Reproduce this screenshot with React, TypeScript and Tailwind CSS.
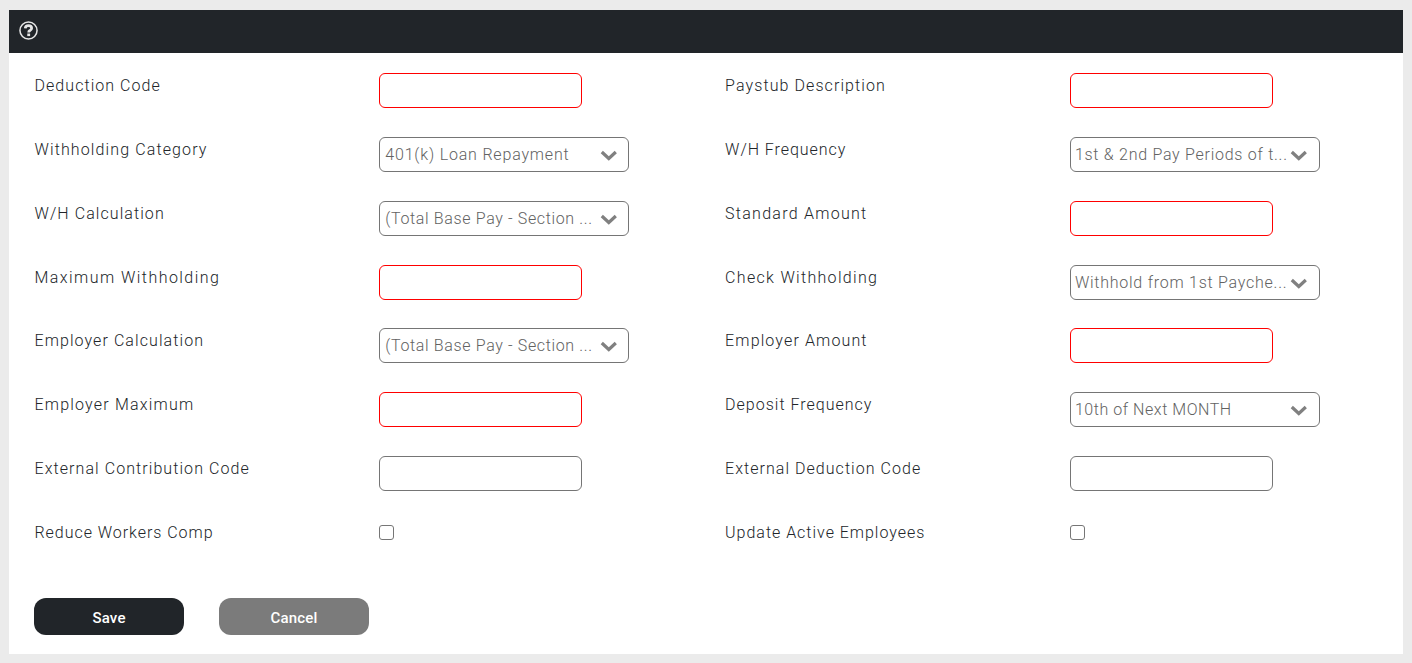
import { useState } from "react";

type FieldType = "text" | "select" | "checkbox";

interface Field {
  label: string;
  type: FieldType;
  value?: string;
  required?: boolean;
  labelClass: string;
  valueClass?: string;
}

const fields: Field[] = [
  { label: "Deduction Code", type: "text", required: true, labelClass: "tracking-[1.05px]" },
  { label: "Paystub Description", type: "text", required: true, labelClass: "tracking-[1.09px]" },
  { label: "Withholding Category", type: "select", value: "401(k) Loan Repayment", labelClass: "tracking-[1.12px]", valueClass: "tracking-[0.81px]" },
  { label: "W/H Frequency", type: "select", value: "1st & 2nd Pay Periods of t...", labelClass: "tracking-[0.95px]", valueClass: "tracking-[0.73px] -ml-px" },
  { label: "W/H Calculation", type: "select", value: "(Total Base Pay - Section ...", labelClass: "tracking-[1.07px]", valueClass: "tracking-[0.64px]" },
  { label: "Standard Amount", type: "text", required: true, labelClass: "tracking-[1.26px]" },
  { label: "Maximum Withholding", type: "text", required: true, labelClass: "tracking-[1.45px]" },
  { label: "Check Withholding", type: "select", value: "Withhold from 1st Payche...", labelClass: "tracking-[1.31px]", valueClass: "tracking-[0.75px] -ml-px" },
  { label: "Employer Calculation", type: "select", value: "(Total Base Pay - Section ...", labelClass: "tracking-[1.08px]", valueClass: "tracking-[0.64px]" },
  { label: "Employer Amount", type: "text", required: true, labelClass: "tracking-[1.13px]" },
  { label: "Employer Maximum", type: "text", required: true, labelClass: "tracking-[1.2px]" },
  { label: "Deposit Frequency", type: "select", value: "10th of Next MONTH", labelClass: "tracking-[1px]", valueClass: "tracking-[0.55px] -ml-px" },
  { label: "External Contribution Code", type: "text", labelClass: "tracking-[1.07px]" },
  { label: "External Deduction Code", type: "text", labelClass: "tracking-[1.04px]" },
  { label: "Reduce Workers Comp", type: "checkbox", labelClass: "tracking-[0.96px]" },
  { label: "Update Active Employees", type: "checkbox", labelClass: "tracking-[0.98px]" },
];

function HelpIcon() {
  return (
    <svg width="19" height="19" viewBox="0 0 20 20" fill="none" stroke="#e6e6e6">
      <circle cx="10" cy="10" r="9" strokeWidth="1.6" />
      <path d="M6.600 7.800C6.700 5.800 8 4.900 10 4.900c2 0 3.300 1 3.300 2.600 0 1.400-.9 1.900-1.800 2.500-.8.500-1.300.9-1.300 2" strokeWidth="2.900" />
      <path d="M10.200 13.200v2.700" strokeWidth="3" />
    </svg>
  );
}

function Arrow() {
  return (
    <svg width="18" height="13" viewBox="0 0 18 13" fill="none" className="mt-[2px] shrink-0">
      <path d="M1.800 3l7 6.500 7-6.500" stroke="#808080" strokeWidth="3.200" />
    </svg>
  );
}

function Control({ field }: { field: Field }) {
  const [checked, setChecked] = useState(false);

  if (field.type === "checkbox") {
    return (
      <input
        type="checkbox"
        aria-label={field.label}
        checked={checked}
        onChange={() => setChecked(!checked)}
        className="mt-[5px] block h-[15px] w-[15px] appearance-none rounded-[3px] border border-[#767676] bg-white checked:bg-[#212529]"
      />
    );
  }

  if (field.type === "select") {
    return (
      <button
        type="button"
        className="flex h-[35px] w-[250px] items-center justify-between rounded-md border border-[#757575] bg-white pr-[10.5px] pl-[5px] text-[#626262]"
      >
        <span className={`pt-px whitespace-nowrap ${field.valueClass}`}>{field.value}</span>
        <Arrow />
      </button>
    );
  }

  return (
    <input
      type="text"
      aria-label={field.label}
      className={`block h-[35px] w-[203px] rounded-md border bg-white px-[5px] outline-none ${
        field.required ? "border-[#f00]" : "border-[#757575]"
      }`}
    />
  );
}

function App() {
  return (
    <div className="h-[663px] bg-[#ebebeb] px-[9px] pt-[10px] font-['Roboto',sans-serif] text-base font-light text-[#212529]">
      <div className="h-[644px] bg-white">
        <header className="flex h-[43px] items-center bg-[#212529] pb-[2px] pl-[10px]">
          <HelpIcon />
        </header>

        <form onSubmit={(e) => e.preventDefault()} className="pt-[20.2px] pl-[25px]">
          <div className="grid auto-rows-[63.8px] grid-cols-[repeat(4,345.3px)]">
            {fields.map((field) => (
              <div key={field.label} className="contents">
                <div className="pt-px pl-[0.5px]">
                  <span className={`inline-block leading-6 whitespace-nowrap ${field.labelClass}`}>{field.label}</span>
                </div>
                <div>
                  <Control field={field} />
                </div>
              </div>
            ))}
          </div>

          <div className="mt-[14.4px] flex gap-[35px] text-[15px] font-medium tracking-[0.2px] text-white">
            <button type="submit" className="h-[37px] w-[150px] rounded-xl bg-[#212529] pt-[4px]">
              Save
            </button>
            <button type="button" className="h-[37px] w-[150px] rounded-xl bg-[#7b7b7b] pt-[4px]">
              Cancel
            </button>
          </div>
        </form>
      </div>
    </div>
  );
}

export default App;
